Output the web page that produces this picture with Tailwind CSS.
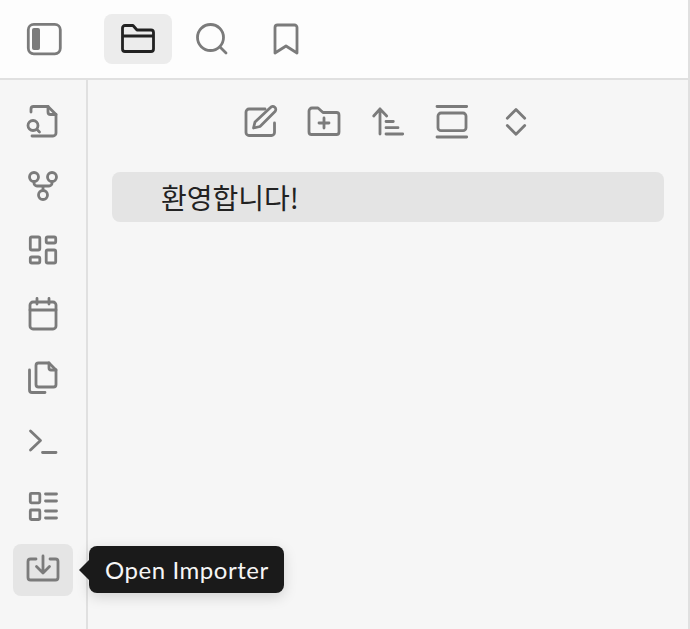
<!DOCTYPE html>
<html lang="ko">
<head>
    <meta charset="UTF-8">
    <meta name="viewport" content="width=device-width, initial-scale=1.0">
    <title>Vault</title>
    <script src="https://cdn.jsdelivr.net/npm/@tailwindcss/browser@4"></script>
</head>
<body class="overflow-hidden bg-[#f6f6f6]">
    <div class="h-[629px] w-[690px] flex flex-col border-r-2 border-[#e0e0e0] font-['Lato',sans-serif] text-[#7b7b7b]">

        <!-- top bar -->
        <div class="h-[80px] shrink-0 flex items-center bg-[#fdfdfd] border-b-2 border-[#e0e0e0]">
            <div class="w-[88px] flex justify-center">
                <svg width="40" height="40" viewBox="0 0 40 40" fill="none" stroke="currentColor" stroke-width="2.8">
                    <rect x="4.300" y="5.300" width="32" height="29.500" rx="5.500"/>
                    <rect x="8" y="9" width="8" height="22" rx="2" fill="currentColor" stroke="none"/>
                </svg>
            </div>
            <div class="ml-[16px] flex gap-[6px]">
                <div class="w-[68px] h-[50px] rounded-lg bg-[#ececec] flex items-center justify-center text-[#222222]">
                    <svg width="40" height="40" viewBox="0 0 40 40" fill="none" stroke="currentColor" stroke-width="2.800" stroke-linecap="round" stroke-linejoin="round">
                        <path d="M4.500 17H35.500M7 6.500H15L19 11H33a2.500 2.500 0 0 1 2.500 2.500V30a2.500 2.500 0 0 1-2.500 2.500H7A2.500 2.500 0 0 1 4.500 30V9A2.500 2.500 0 0 1 7 6.500Z"/>
                    </svg>
                </div>
                <div class="w-[68px] h-[50px] flex items-center justify-center">
                    <svg width="40" height="40" viewBox="0 0 40 40" fill="none" stroke="currentColor" stroke-width="2.800" stroke-linecap="round" stroke-linejoin="round">
                        <circle cx="18.500" cy="18.500" r="13"/>
                        <path d="M28 28L34 34"/>
                    </svg>
                </div>
                <div class="w-[68px] h-[50px] flex items-center justify-center">
                    <svg width="40" height="40" viewBox="0 0 40 40" fill="none" stroke="currentColor" stroke-width="2.800" stroke-linecap="round" stroke-linejoin="round">
                        <path d="M31 34L20 27L9 34V8.500A2.500 2.500 0 0 1 11.500 6H28.500A2.500 2.500 0 0 1 31 8.500Z"/>
                    </svg>
                </div>
            </div>
        </div>

        <div class="flex-1 flex min-h-0">
            <!-- ribbon -->
            <div class="relative w-[88px] shrink-0 border-r-2 border-[#e0e0e0] pt-[16px] flex flex-col items-center gap-[12px]">
                <div class="w-[60px] h-[52px] flex items-center justify-center">
                    <svg width="40" height="40" viewBox="0 0 40 40" fill="none" stroke="currentColor" stroke-width="2.800" stroke-linecap="round" stroke-linejoin="round">
                        <path d="M8 10V7A2.500 2.500 0 0 1 10.500 4.500H25L33 12.500V31A3 3 0 0 1 30 34H9"/>
                        <path d="M25 4.500V10A2.500 2.500 0 0 0 27.500 12.500H33"/>
                        <circle cx="10" cy="23.500" r="5"/>
                        <path d="M14 27.500L16.500 30"/>
                    </svg>
                </div>
                <div class="w-[60px] h-[52px] flex items-center justify-center">
                    <svg width="40" height="40" viewBox="0 0 40 40" fill="none" stroke="currentColor" stroke-width="2.800" stroke-linecap="round" stroke-linejoin="round">
                        <circle cx="11" cy="11" r="4.500"/>
                        <circle cx="29" cy="11" r="4.500"/>
                        <circle cx="20" cy="29" r="4.500"/>
                        <path d="M11 15.500V17A3 3 0 0 0 14 20H26A3 3 0 0 0 29 17V15.500M20 20V24.500"/>
                    </svg>
                </div>
                <div class="w-[60px] h-[52px] flex items-center justify-center">
                    <svg width="40" height="40" viewBox="0 0 40 40" fill="none" stroke="currentColor" stroke-width="2.800" stroke-linecap="round" stroke-linejoin="round">
                        <rect x="7.300" y="7" width="9.500" height="13" rx="1.500"/>
                        <rect x="7.300" y="27" width="9.500" height="6" rx="1.500"/>
                        <rect x="23.200" y="7" width="9.500" height="6" rx="1.500"/>
                        <rect x="23.200" y="20" width="9.500" height="13" rx="1.500"/>
                    </svg>
                </div>
                <div class="w-[60px] h-[52px] flex items-center justify-center">
                    <svg width="40" height="40" viewBox="0 0 40 40" fill="none" stroke="currentColor" stroke-width="2.800" stroke-linecap="round" stroke-linejoin="round">
                        <rect x="7" y="8" width="26" height="27" rx="3"/>
                        <path d="M7 16H33M14 4.500V10M26 4.500V10"/>
                    </svg>
                </div>
                <div class="w-[60px] h-[52px] flex items-center justify-center">
                    <svg width="40" height="40" viewBox="0 0 40 40" fill="none" stroke="currentColor" stroke-width="2.800" stroke-linecap="round" stroke-linejoin="round">
                        <path d="M15.500 5H26L33 12V26.500A2.500 2.500 0 0 1 30.500 29H15.500A2.500 2.500 0 0 1 13 26.500V7.500A2.500 2.500 0 0 1 15.500 5Z"/>
                        <path d="M26 5V10A2 2 0 0 0 28 12H33"/>
                        <path d="M6.500 12V32A2.500 2.500 0 0 0 9 34.500H22"/>
                    </svg>
                </div>
                <div class="w-[60px] h-[52px] flex items-center justify-center">
                    <svg width="40" height="40" viewBox="0 0 40 40" fill="none" stroke="currentColor" stroke-width="2.800" stroke-linecap="round" stroke-linejoin="round">
                        <path d="M7.500 9L17.500 18.500L7.500 28M19.500 30.500H33"/>
                    </svg>
                </div>
                <div class="w-[60px] h-[52px] flex items-center justify-center">
                    <svg width="40" height="40" viewBox="0 0 40 40" fill="none" stroke="currentColor" stroke-width="2.800" stroke-linecap="round" stroke-linejoin="round">
                        <rect x="7.300" y="7.300" width="9.500" height="9.500" rx="1"/>
                        <rect x="7.300" y="24" width="9.500" height="9.500" rx="1"/>
                        <path d="M22.500 8H33.500M22.500 15H33.500M22.500 25H33.500M22.500 32H33.500"/>
                    </svg>
                </div>
                <div class="w-[60px] h-[52px] rounded-lg bg-[#e5e5e5] flex items-center justify-center">
                    <svg width="40" height="40" viewBox="0 0 40 40" fill="none" stroke="currentColor" stroke-width="2.800" stroke-linecap="round" stroke-linejoin="round">
                        <path d="M13 9H7.500A2.500 2.500 0 0 0 5 11.500V27.500A2.500 2.500 0 0 0 7.500 30H32.500A2.500 2.500 0 0 0 35 27.500V11.500A2.500 2.500 0 0 0 32.500 9H27"/>
                        <path d="M20 6V23M13.500 16.500L20 23L26.500 16.500"/>
                    </svg>
                </div>

                <!-- tooltip -->
                <div class="absolute left-[89px] top-[466px] h-[47px] w-[195px] rounded-lg bg-[#1a1a1a] shadow-[0_4px_14px_rgba(0,0,0,0.15)] flex items-center pl-[16px] text-[24px] tracking-[0.55px] text-[#f6f6f6] whitespace-nowrap z-10">
                    <div class="absolute -left-[10px] top-[14px] w-0 h-0 border-y-[10px] border-y-transparent border-r-[10px] border-r-[#1a1a1a]"></div>
                    Open Importer
                </div>
            </div>

            <!-- file pane -->
            <div class="flex-1 min-w-0 flex flex-col items-stretch px-[24px]">
                <div class="h-[52px] mt-[16px] flex items-center justify-center gap-[12px]">
                    <div class="w-[52px] h-[52px] flex items-center justify-center">
                        <svg width="40" height="40" viewBox="0 0 40 40" fill="none" stroke="currentColor" stroke-width="2.800" stroke-linecap="round" stroke-linejoin="round">
                            <path d="M25 7H9A3 3 0 0 0 6 10V30.500A3 3 0 0 0 9 33.500H31.500A3 3 0 0 0 34.500 30.500V21"/>
                            <path d="M13.500 26L15 20L30.500 5.500A2.800 2.800 0 0 1 35 9.500L20 24.500Z"/>
                        </svg>
                    </div>
                    <div class="w-[52px] h-[52px] flex items-center justify-center">
                        <svg width="40" height="40" viewBox="0 0 40 40" fill="none" stroke="currentColor" stroke-width="2.800" stroke-linecap="round" stroke-linejoin="round">
                            <path d="M8 6H14L19 10.500H32.500A2.500 2.500 0 0 1 35 13V30A2.500 2.500 0 0 1 32.500 32.500H7.500A2.500 2.500 0 0 1 5 30V9A3 3 0 0 1 8 6Z"/>
                            <path d="M20 16V26M15 21H25"/>
                        </svg>
                    </div>
                    <div class="w-[52px] h-[52px] flex items-center justify-center">
                        <svg width="40" height="40" viewBox="0 0 40 40" fill="none" stroke="currentColor" stroke-width="2.800" stroke-linecap="round" stroke-linejoin="round">
                            <path d="M12 7V32M5.700 14L12 7L18.700 14"/>
                            <path d="M18 19.500H25.300M18 25.700H30M18 32H34.700"/>
                        </svg>
                    </div>
                    <div class="w-[52px] h-[52px] flex items-center justify-center">
                        <svg width="40" height="40" viewBox="0 0 40 40" fill="none" stroke="currentColor" stroke-width="2.800" stroke-linecap="round" stroke-linejoin="round">
                            <path d="M5 4.500H34.700M5 35H34.700"/>
                            <rect x="6" y="11" width="28" height="17.700" rx="3"/>
                        </svg>
                    </div>
                    <div class="w-[52px] h-[52px] flex items-center justify-center">
                        <svg width="40" height="40" viewBox="0 0 40 40" fill="none" stroke="currentColor" stroke-width="2.800" stroke-linecap="round" stroke-linejoin="round">
                            <path d="M11.300 16.300L20 7.500L28.700 16.300M11.300 23.500L20 32.300L28.700 23.500"/>
                        </svg>
                    </div>
                </div>
                <div class="mt-[24px] h-[50px] rounded-lg bg-[#e4e4e4] flex items-center pl-[49px] text-[28px] text-[#222222] font-['Noto_Sans_CJK_KR',sans-serif]">환영합니다!</div>
            </div>
        </div>
    </div>
</body>
</html>
